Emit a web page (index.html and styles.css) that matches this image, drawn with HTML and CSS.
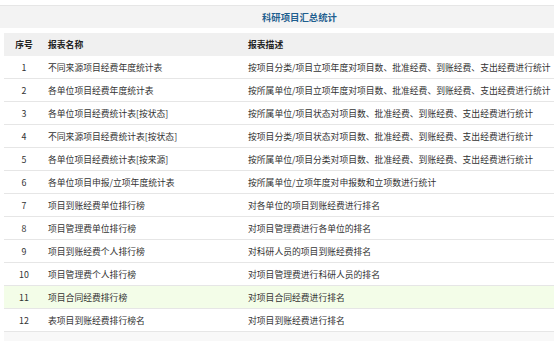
FILE: index.html
```html
<!DOCTYPE html>
<html lang="zh">
<head>
<meta charset="utf-8">
<link rel="stylesheet" href="styles.css">
</head>
<body>
<div class="title-bar"><span class="title-text">科研项目汇总统计</span></div>
<table class="report">
  <thead>
    <tr><th class="c-no">序号</th><th class="c-name">报表名称</th><th class="c-desc">报表描述</th></tr>
  </thead>
  <tbody>
    <tr><td class="c-no">1</td><td>不同来源项目经费年度统计表</td><td>按项目分类/项目立项年度对项目数、批准经费、到账经费、支出经费进行统计</td></tr>
    <tr><td class="c-no">2</td><td>各单位项目经费年度统计表</td><td>按所属单位/项目立项年度对项目数、批准经费、到账经费、支出经费进行统计</td></tr>
    <tr><td class="c-no">3</td><td>各单位项目经费统计表[按状态]</td><td>按所属单位/项目状态对项目数、批准经费、到账经费、支出经费进行统计</td></tr>
    <tr><td class="c-no">4</td><td>不同来源项目经费统计表[按状态]</td><td>按项目分类/项目状态对项目数、批准经费、到账经费、支出经费进行统计</td></tr>
    <tr><td class="c-no">5</td><td>各单位项目经费统计表[按来源]</td><td>按所属单位/项目分类对项目数、批准经费、到账经费、支出经费进行统计</td></tr>
    <tr><td class="c-no">6</td><td>各单位项目申报/立项年度统计表</td><td>按所属单位/立项年度对申报数和立项数进行统计</td></tr>
    <tr><td class="c-no">7</td><td>项目到账经费单位排行榜</td><td>对各单位的项目到账经费进行排名</td></tr>
    <tr><td class="c-no">8</td><td>项目管理费单位排行榜</td><td>对项目管理费进行各单位的排名</td></tr>
    <tr><td class="c-no">9</td><td>项目到账经费个人排行榜</td><td>对科研人员的项目到账经费排名</td></tr>
    <tr><td class="c-no">10</td><td>项目管理费个人排行榜</td><td>对项目管理费进行科研人员的排名</td></tr>
    <tr class="hl"><td class="c-no">11</td><td>项目合同经费排行榜</td><td>对项目合同经费进行排名</td></tr>
    <tr><td class="c-no">12</td><td>表项目到账经费排行榜名</td><td>对项目到账经费进行排名</td></tr>
  </tbody>
</table>
<div class="footer-area"></div>
</body>
</html>
```

FILE: styles.css
```css
html, body {
  margin: 0;
  padding: 0;
  background: #fff;
}
body {
  font-family: "Noto Sans CJK SC", "DejaVu Sans", sans-serif;
  font-size: 8.8px;
  color: #333;
  padding-top: 5px;
  overflow: hidden;
}
.title-bar {
  height: 22px;
  line-height: 22px;
  border-top: 1px solid #e6e6e6;
  background: #f3f3f3;
  text-align: center;
  padding-left: 45px;
}
.title-text {
  color: #1f5f8f;
  font-weight: bold;
  font-size: 9.4px;
}
.report {
  margin: 5px 0 0 4px;
  width: 550px;
  border-collapse: collapse;
  table-layout: fixed;
}
.report th, .report td {
  height: 22px;
  padding: 0 0 0 4px;
  text-align: left;
  white-space: nowrap;
  overflow: hidden;
  border-bottom: 1px solid #e6e6e6;
}
.report th {
  background: #f0f0f0;
  font-weight: bold;
  color: #222;
  border-bottom: none;
  height: 23px;
}
.report .c-no {
  text-align: center;
  padding: 0;
}
.report th.c-no { width: 40px; }
.report th.c-name { width: 196px; }
.report tr.hl td {
  background: #f3fde8;
}
.footer-area {
  margin-left: 4px;
  height: 20px;
  background: #f8f8f8;
}
```
